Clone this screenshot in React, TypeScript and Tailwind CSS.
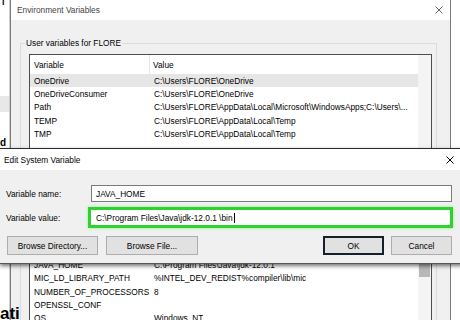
import clsx from "clsx";

const userVars: [string, string][] = [
  ["OneDrive", "C:\\Users\\FLORE\\OneDrive"],
  ["OneDriveConsumer", "C:\\Users\\FLORE\\OneDrive"],
  ["Path", "C:\\Users\\FLORE\\AppData\\Local\\Microsoft\\WindowsApps;C:\\Users\\..."],
  ["TEMP", "C:\\Users\\FLORE\\AppData\\Local\\Temp"],
  ["TMP", "C:\\Users\\FLORE\\AppData\\Local\\Temp"],
];

// rows above JAVA_HOME sit under the dialog, so they are left blank
const systemVars: [string, string][] = [
  ["", ""],
  ["", ""],
  ["", ""],
  ["JAVA_HOME", "C:\\Program Files\\Java\\jdk-12.0.1"],
  ["MIC_LD_LIBRARY_PATH", "%INTEL_DEV_REDIST%compiler\\lib\\mic"],
  ["NUMBER_OF_PROCESSORS", "8"],
  ["OPENSSL_CONF", ""],
  ["OS", "Windows_NT"],
];

function CloseX({ className }: { className?: string }) {
  return (
    <svg width="8" height="8" viewBox="0 0 8 8" className={className}>
      <path d="M0.5 0.5L7.5 7.5M7.5 0.5L0.5 7.5" stroke="currentColor" strokeWidth="1" fill="none" />
    </svg>
  );
}

function ListRow({ name, value, selected }: { name: string; value: string; selected?: boolean }) {
  return (
    <div className={clsx("flex h-[13.4px] items-center whitespace-nowrap", selected && "bg-[#e6e6e6]")}>
      <div className="w-[124px] shrink-0 overflow-hidden pl-[4px]">{name}</div>
      <div className="overflow-hidden">{value}</div>
    </div>
  );
}

function VarList({
  rows,
  selectedFirst,
  height,
  thumb,
  header = true,
}: {
  rows: [string, string][];
  selectedFirst?: boolean;
  height: string;
  thumb?: boolean;
  header?: boolean;
}) {
  return (
    <div className={clsx("flex border border-[#4d4d4d] bg-white", height)}>
      <div className="min-w-0 flex-1 overflow-hidden">
        <div className="flex h-[19px] items-center whitespace-nowrap">
          <div className="flex h-full w-[120px] shrink-0 items-center border-r border-[#e5e5e5] pl-[4px]">
            {header && "Variable"}
          </div>
          <div className="pl-[3px]">{header && "Value"}</div>
        </div>
        {rows.map(([n, v], i) => (
          <ListRow key={i} name={n} value={v} selected={selectedFirst && i === 0} />
        ))}
      </div>
      <div className="w-[13px] shrink-0 bg-[#f4f4f4] pt-[20px]">
        {thumb && <div className="mx-[1px] h-[58px] bg-[#b8b8b8]" />}
      </div>
    </div>
  );
}

function Button({ label, className }: { label: string; className?: string }) {
  return (
    <div className={clsx("flex h-[19px] items-center justify-center border bg-[#e1e1e1]", className)}>
      {label}
    </div>
  );
}

export default function App() {
  return (
    <div className="relative flex h-[320px] w-[460px] overflow-hidden bg-white font-['Liberation_Sans',Arial,sans-serif] text-[8.3px] leading-[10px] text-black">
      {/* window behind, left edge */}
      <div className="relative w-[10px] shrink-0 border-r border-[#cfcfcf] bg-white">
        <span className="absolute left-[2px] top-[-3px] text-[9px] font-bold">ı</span>
        <div className="mt-[96px] h-[16px] bg-[#e8e8e8]" />
        <span className="absolute left-[0px] top-[138px] text-[10px] font-bold">d</span>
      </div>

      {/* Environment Variables window */}
      <div className="flex w-[441px] shrink-0 flex-col border-x border-[#7a7a7a]">
        <div className="flex h-[20px] shrink-0 items-center justify-between bg-white pl-[6px] pr-[7px] text-[#444]">
          <span>Environment Variables</span>
          <CloseX className="text-[#666]" />
        </div>
        <div className="flex-1 bg-[#f0f0f0] pl-[9px] pr-[13px]">
          <fieldset className="mt-[18px] border border-[#dcdcdc] pb-[8px] pl-[8px] pr-[4px] pt-[6px]">
            <legend className="ml-[-4px] px-[1px]">User variables for FLORE</legend>
            <VarList rows={userVars} selectedFirst height="h-[110px]" />
          </fieldset>
          <div className="mt-[14px] border border-[#dcdcdc] pb-[8px] pl-[8px] pr-[4px] pt-[10px]">
            <VarList rows={systemVars} height="h-[140px]" thumb header={false} />
          </div>
        </div>
      </div>

      {/* page text fragment at the corner */}
      <span className="absolute left-0 top-[305px] text-[17px] font-bold leading-[17px]">ati</span>

      {/* Edit System Variable dialog */}
      <div className="absolute left-0 top-[148px] z-10 w-[468px] border-t border-[#2b2b2b] shadow-[0_2px_4px_rgba(0,0,0,0.55)]">
        <div className="flex h-[21px] items-center justify-between bg-white pl-[4px] pr-[14px]">
          <span>Edit System Variable</span>
          <CloseX />
        </div>
        <div className="relative h-[94px] border-b border-[#555] bg-[#f0f0f0] pt-[15px]">
          <div className="flex items-center">
            <div className="w-[91px] shrink-0 pl-[6px]">Variable name:</div>
            <div className="flex h-[17px] w-[361px] items-center border border-[#7a7a7a] bg-white pl-[4px]">
              JAVA_HOME
            </div>
          </div>
          <div className="mt-[5px] flex items-center">
            <div className="w-[88px] shrink-0 pl-[6px]">Variable value:</div>
            <div className="flex h-[21px] w-[365px] items-center border-[3px] border-[#2fd12f] bg-white pl-[5px] shadow-[0_0_3px_#8af08a]">
              <span>C:\Program Files\Java\jdk-12.0.1 \bin</span>
              <span className="ml-[1px] h-[10px] w-px bg-black" />
            </div>
          </div>
          <div className="mt-[8px] flex">
            <Button label="Browse Directory..." className="ml-[7px] w-[91px] border-[#adadad]" />
            <Button label="Browse File..." className="ml-[8px] w-[92px] border-[#adadad]" />
            <Button label="OK" className="ml-[125px] w-[61px] border-2 border-[#16202c]" />
            <Button label="Cancel" className="ml-[7px] w-[61px] border-[#adadad]" />
          </div>
        </div>
      </div>
    </div>
  );
}
